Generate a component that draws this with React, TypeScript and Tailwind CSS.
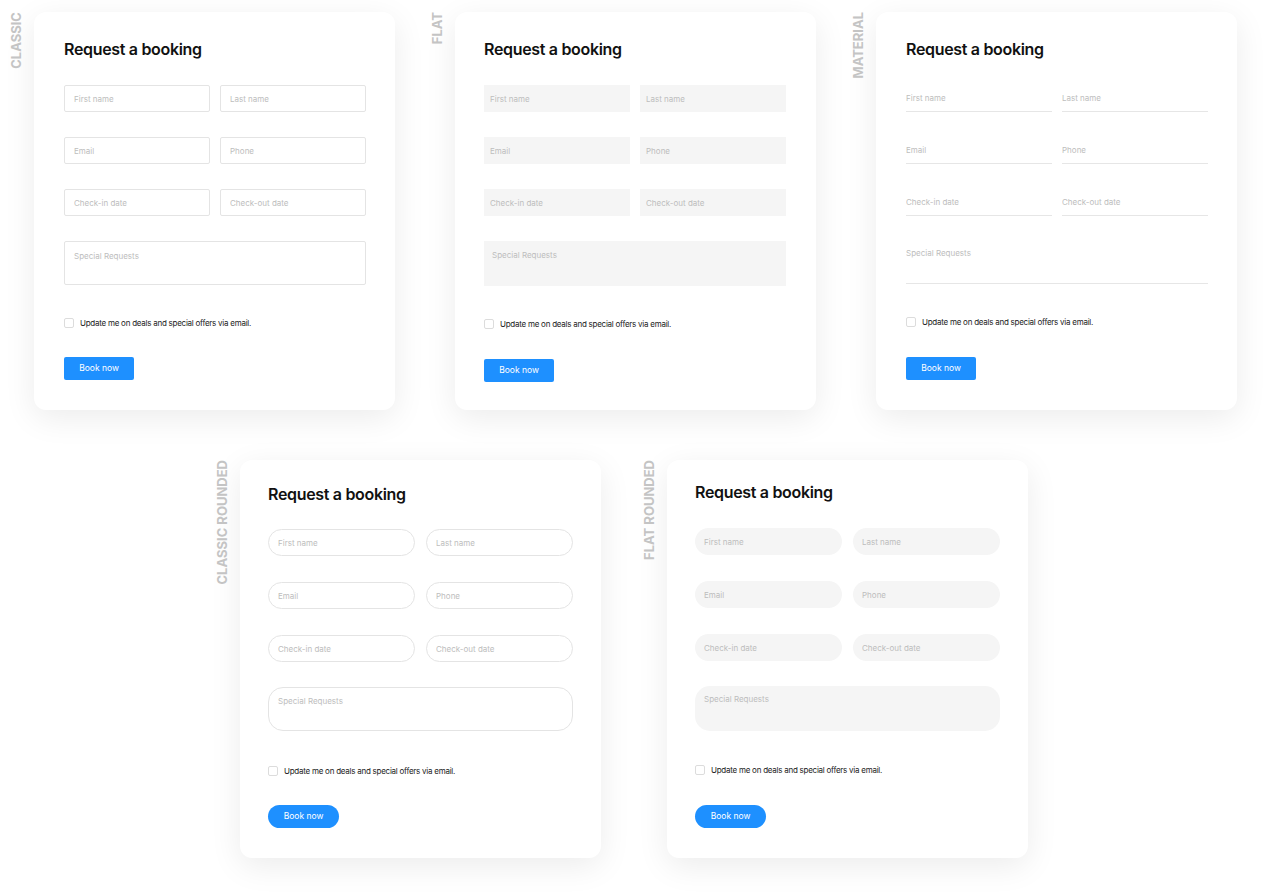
import React from "react";

type Variant = "classic" | "flat" | "material" | "classicRounded" | "flatRounded";

type VStyle = {
  card: string;
  grid: string;
  input: string;
  textarea: string;
  check: string;
  button: string;
};

const V: Record<Variant, VStyle> = {
  classic: {
    card: "pl-[30px] pr-[29px] pt-[27px]",
    grid: "mt-[25px] gap-x-[10px] gap-y-[25px]",
    input: "h-[27px] border border-[#e4e4e4] rounded-[2px] px-[9px]",
    textarea: "mt-[25px] h-[44px] border border-[#e4e4e4] rounded-[2px] px-[9px] pt-[8px]",
    check: "mt-[33px]",
    button: "mt-[29px] w-[70px] h-[23px] rounded-[2px]",
  },
  flat: {
    card: "pl-[29px] pr-[30px] pt-[27px]",
    grid: "mt-[25px] gap-x-[10px] gap-y-[25px]",
    input: "h-[27px] bg-[#f5f5f5] px-[6px]",
    textarea: "mt-[25px] h-[45px] bg-[#f5f5f5] px-[8px] pt-[8px]",
    check: "mt-[33px]",
    button: "mt-[30px] w-[70px] h-[23px] rounded-[2px]",
  },
  material: {
    card: "pl-[30px] pr-[29px] pt-[27px]",
    grid: "mt-[25px] gap-x-[10px] gap-y-[25px]",
    input: "h-[27px] border-b border-[#e6e6e6]",
    textarea: "mt-[25px] h-[43px] border-b border-[#e6e6e6] pt-[6px]",
    check: "mt-[33px]",
    button: "mt-[30px] w-[70px] h-[23px] rounded-[2px]",
  },
  classicRounded: {
    card: "pl-[28px] pr-[28px] pt-[24px]",
    grid: "mt-[24px] gap-x-[11px] gap-y-[26px]",
    input: "h-[27px] border border-[#e4e4e4] rounded-full px-[9px]",
    textarea: "mt-[25px] h-[44px] border border-[#e4e4e4] rounded-[15px] px-[9px] pt-[7px]",
    check: "mt-[35px]",
    button: "mt-[29px] w-[71px] h-[23px] rounded-full",
  },
  flatRounded: {
    card: "pl-[28px] pr-[28px] pt-[22px]",
    grid: "mt-[25px] gap-x-[11px] gap-y-[26px]",
    input: "h-[27px] bg-[#f5f5f5] rounded-full px-[9px]",
    textarea: "mt-[25px] h-[45px] bg-[#f5f5f5] rounded-[15px] px-[9px] pt-[7px]",
    check: "mt-[34px]",
    button: "mt-[30px] w-[71px] h-[23px] rounded-full",
  },
};

function Field({ v, placeholder }: { v: Variant; placeholder: string }) {
  return (
    <input
      type="text"
      placeholder={placeholder}
      className={`${V[v].input} w-full min-w-0 text-[8px] text-[#333] outline-none placeholder:text-[#bdbdbd]`}
    />
  );
}

function Card({ v }: { v: Variant }) {
  const s = V[v];
  return (
    <div
      className={`w-[361px] h-[398px] shrink-0 rounded-[12px] bg-white shadow-[0_8px_32px_rgba(0,0,0,0.08)] flex flex-col ${s.card}`}
    >
      <h2 className="text-[16px] leading-[21px] font-semibold tracking-[-0.02em] text-[#111]">
        Request a booking
      </h2>
      <div className={`grid grid-cols-2 ${s.grid}`}>
        <Field v={v} placeholder="First name" />
        <Field v={v} placeholder="Last name" />
        <Field v={v} placeholder="Email" />
        <Field v={v} placeholder="Phone" />
        <Field v={v} placeholder="Check-in date" />
        <Field v={v} placeholder="Check-out date" />
      </div>
      <textarea
        placeholder="Special Requests"
        className={`${s.textarea} w-full resize-none text-[8px] leading-[12px] text-[#333] outline-none placeholder:text-[#bdbdbd]`}
      />
      <label className={`${s.check} flex items-center gap-[6px] h-[10px]`}>
        <span className="w-[10px] h-[10px] shrink-0 rounded-[2px] border border-[#dcdcdc] bg-white" />
        <span className="text-[8px] leading-[10px] tracking-[-0.25px] text-[#222]">
          Update me on deals and special offers via email.
        </span>
      </label>
      <button
        className={`${s.button} bg-[#1e90ff] text-white text-[8.5px] flex items-center justify-center`}
      >
        Book now
      </button>
    </div>
  );
}

function Item({ label, v }: { label: string; v: Variant }) {
  return (
    <div className="flex items-start gap-[11px]">
      <div className="w-[13px] flex justify-center self-start">
        <span className="[writing-mode:vertical-rl] rotate-180 text-[13px] leading-none font-bold text-[#c4c4c4] whitespace-nowrap">
          {label}
        </span>
      </div>
      <Card v={v} />
    </div>
  );
}

export default function App() {
  return (
    <div className="w-[1270px] h-[894px] bg-white overflow-hidden [font-family:Inter,sans-serif]">
      <div className="flex pt-[12px] pl-[10px] gap-[36px]">
        <Item label="CLASSIC" v="classic" />
        <Item label="FLAT" v="flat" />
        <Item label="MATERIAL" v="material" />
      </div>
      <div className="flex mt-[50px] pl-[216px] gap-[42px]">
        <Item label="CLASSIC ROUNDED" v="classicRounded" />
        <Item label="FLAT ROUNDED" v="flatRounded" />
      </div>
    </div>
  );
}
